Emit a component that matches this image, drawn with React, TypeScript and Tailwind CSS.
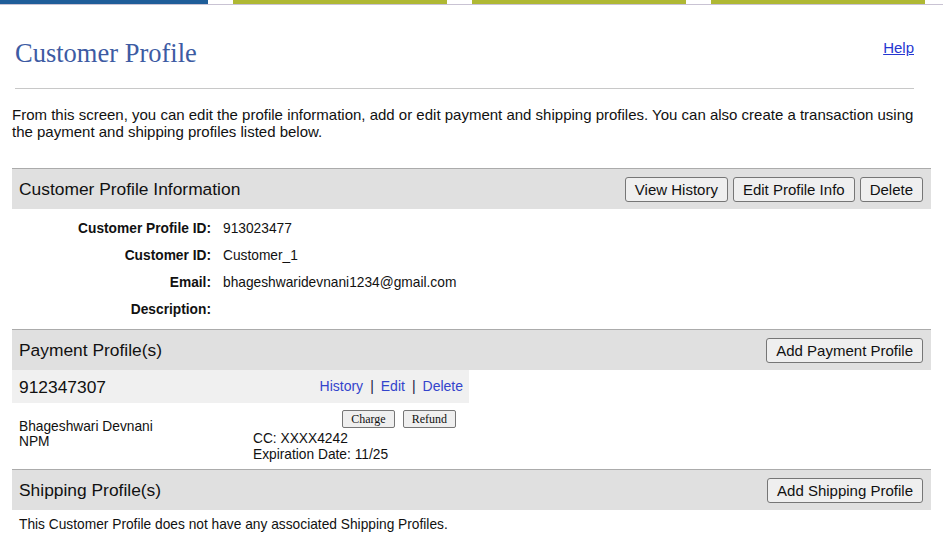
import React from "react";

const sans = "font-['Liberation_Sans',Arial,Helvetica,sans-serif]";
const serif = "font-['Liberation_Serif','Times_New_Roman',serif]";

function Btn({ children }: { children: React.ReactNode }) {
  return (
    <button
      className={`${sans} h-[25px] px-[9px] border border-[#767676] rounded-[3px] bg-[#efefef] text-[15px] leading-[17px] text-[#111]`}
    >
      {children}
    </button>
  );
}

function SmallBtn({ children }: { children: React.ReactNode }) {
  return (
    <button
      className={`${serif} h-[18px] px-[8px] border border-[#767676] rounded-[2px] bg-[#efefef] text-[12px] leading-[14px] text-[#111]`}
    >
      {children}
    </button>
  );
}

function SectionHead({
  title,
  children,
}: {
  title: string;
  children?: React.ReactNode;
}) {
  return (
    <div className="h-[41px] border-t border-[#ababab] bg-[#e0e0e0] flex items-center justify-between pl-[7px] pr-2">
      <h2 className="text-[17.4px] leading-[20px] text-[#111]">{title}</h2>
      <div className="flex gap-[5px]">{children}</div>
    </div>
  );
}

const info = [
  { label: "Customer Profile ID:", value: "913023477" },
  { label: "Customer ID:", value: "Customer_1" },
  { label: "Email:", value: "bhageshwaridevnani1234@gmail.com" },
  { label: "Description:", value: "" },
];

export default function App() {
  return (
    <div className={`${sans} w-[943px] h-[551px] bg-white text-[#111] overflow-hidden`}>
      {/* brand strip */}
      <div className="flex gap-[25px] border-b border-[#c9c3d3]">
        <div className="w-[208px] h-1 bg-[#1f5e99]" />
        <div className="w-[214px] h-1 bg-[#afb834]" />
        <div className="w-[214px] h-1 bg-[#afb834]" />
        <div className="w-[214px] h-1 bg-[#afb834]" />
      </div>

      <div className="ml-[15px] mr-[29px]">
        <div className="flex items-start justify-between pt-[35px]">
          <h1 className={`${serif} -mt-[2px] mb-[2px] text-[26.5px] leading-[30px] text-[#3d5ba3]`}>
            Customer Profile
          </h1>
          <a href="#" className="-mt-[1px] text-[15px] leading-[17px] text-[#2536d1] underline">
            Help
          </a>
        </div>
        <div className="mt-[18px] h-px bg-[#c8c8c8]" />
      </div>

      <div className="px-3">
        <p className="mt-[17px] text-[15px] leading-[17px]">
          From this screen, you can edit the profile information, add or edit payment and shipping
          profiles. You can also create a transaction using the payment and shipping profiles listed
          below.
        </p>

        <div className="mt-[28px]">
          <SectionHead title="Customer Profile Information">
            <Btn>View History</Btn>
            <Btn>Edit Profile Info</Btn>
            <Btn>Delete</Btn>
          </SectionHead>
          <div className="pt-[7px] pb-[5px] text-[13.75px]">
            {info.map((row) => (
              <div key={row.label} className="h-[27px] flex items-center">
                <div className="w-[199px] text-right font-bold">{row.label}</div>
                <div className="pl-[12px]">{row.value}</div>
              </div>
            ))}
          </div>

          <SectionHead title="Payment Profile(s)">
            <Btn>Add Payment Profile</Btn>
          </SectionHead>
          <div className="w-[457px]">
            <div className="h-[33px] bg-[#f0f0f0] flex items-center justify-between pl-[7px] pr-[6px]">
              <span className="text-[17.4px] leading-[20px]">912347307</span>
              <span className="text-[14px] text-[#3344cc]">
                <a href="#">History</a>
                <span className="px-[7px] text-[#1a1a40]">|</span>
                <a href="#">Edit</a>
                <span className="px-[7px] text-[#1a1a40]">|</span>
                <a href="#">Delete</a>
              </span>
            </div>
            <div className="flex pt-[7px] pb-[6px] text-[13.75px]">
              <div className="w-[241px] pl-[7px] mt-[9px] leading-[15px]">
                <div>Bhageshwari Devnani</div>
                <div>NPM</div>
              </div>
              <div className="w-[216px]">
                <div className="flex justify-end gap-[8px] pr-[13px]">
                  <SmallBtn>Charge</SmallBtn>
                  <SmallBtn>Refund</SmallBtn>
                </div>
                <div className="mt-[3px] leading-[16px]">
                  <div>CC: XXXX4242</div>
                  <div>Expiration Date: 11/25</div>
                </div>
              </div>
            </div>
          </div>

          <SectionHead title="Shipping Profile(s)">
            <Btn>Add Shipping Profile</Btn>
          </SectionHead>
          <p className="pt-[6px] pl-[7px] text-[13.75px] leading-[17px]">
            This Customer Profile does not have any associated Shipping Profiles.
          </p>
        </div>
      </div>
    </div>
  );
}
